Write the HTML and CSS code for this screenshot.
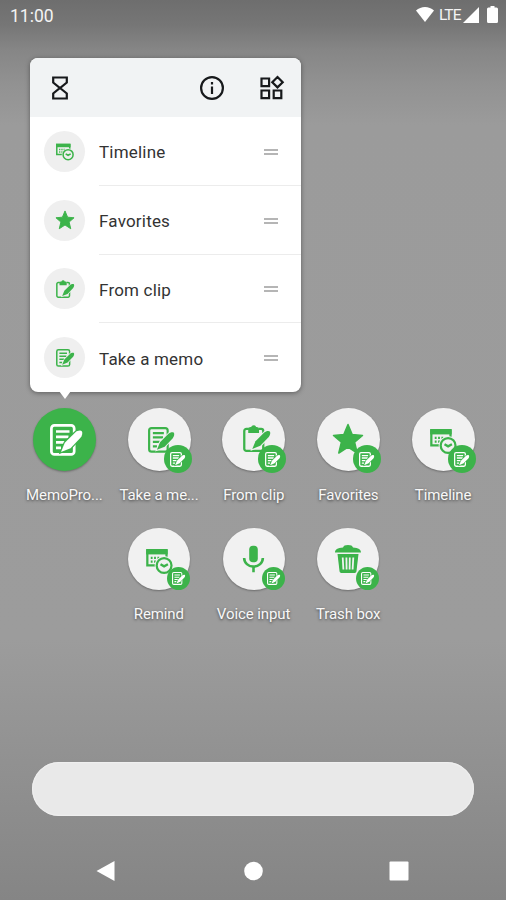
FILE: index.html
```
<!DOCTYPE html>
<html>
<head>
<meta charset="UTF-8">
<title>MemoPro shortcuts</title>
<link rel="stylesheet" href="styles.css">
</head>
<body>
	<!-- shared icons -->
	<svg class="defs">
		<symbol id="memo" viewBox="0 0 32 32">
			<rect class="line" x="1.4" y="1.4" width="22.8" height="29" rx="3"/>
			<path class="line" d="M6 7.500h13.500M6 12.800h12.500M6 18.300h8.500M6 23.800h5"/>
			<path class="pen" d="M31.800 7.200c-1.200-1.300-5-.4-6.600 1.200L14.800 18.800 11 28l9.500-3.800L30.500 13.700c1.600-1.800 2.400-5.200 1.300-6.500z"/>
		</symbol>
		<symbol id="clip" viewBox="0 0 32 32">
			<path class="line" d="M7 4.600H4a2.500 2.500 0 0 0-2.500 2.500v21A2.500 2.500 0 0 0 4 30.600h17.500a2.500 2.500 0 0 0 2.500-2.500V7.100a2.500 2.500 0 0 0-2.500-2.500h-3"/>
			<path class="fill" d="M6.200 9.500V5.200C6.200 3.500 7.500 2.500 9 2.500h.6a3.200 3.200 0 0 1 6 0h.6c1.500 0 2.800 1 2.800 2.700v4.300z"/>
			<path class="pen" d="M31.800 7.700c-1.200-1.300-5-.4-6.600 1.200L14.800 19.300 11 28.500l9.500-3.800L30.500 14.200c1.600-1.800 2.400-5.200 1.300-6.500z"/>
		</symbol>
		<symbol id="star" viewBox="0 0 32 32">
			<path class="fill star" d="M16 1.500l4.200 10 10.300.9-7.900 6.900 2.600 10.700-9.200-6-9.200 6 2.600-10.700-7.900-6.900 10.300-.9z"/>
		</symbol>
		<symbol id="timeline" viewBox="0 0 32 30">
			<path class="line" d="M1.400 2v17.500h23V2z"/>
			<path class="fill" d="M0 0h25.800v6.500H0z"/>
			<path class="line" d="M5.500 10.500h2.200m1.800 0h2.200m1.800 0h2.200M5.500 15h2.200m1.800 0h2.200"/>
			<circle class="halo" cx="21.500" cy="19.800" r="11.300"/>
			<circle class="line" cx="21.500" cy="19.800" r="8.900"/>
			<path class="line" d="M17.200 18.200l4.300 2.600 4.600-2.600"/>
		</symbol>
		<symbol id="mic" viewBox="0 0 22 28">
			<rect class="fill" x="6.500" y="0" width="9" height="17.500" rx="4"/>
			<path class="line" d="M1.200 13a9.800 9 0 0 0 19.600 0M11 22.500V28"/>
		</symbol>
		<symbol id="trash" viewBox="0 0 26 28">
			<path class="fill" d="M0 7.500C0 4.500 2.500 3 8 2.500 8.500 .8 10 0 13 0s4.500 .8 5 2.500c5.500 .5 8 2 8 5z"/>
			<path class="fill" d="M2.500 9h21l-2 17c-.2 1.400-1 2-2.500 2H7c-1.500 0-2.300-.6-2.500-2z"/>
			<path class="bars" d="M7.700 12.500l.7 12M11.400 12.500l.2 12M14.800 12.500l-.2 12M18.300 12.500l-.7 12"/>
		</symbol>
	</svg>

	<div class="statusBar">
		<span class="clock">11:00</span>
		<svg class="wifi" viewBox="0 0 18 15"><path d="M0 3.600C5-1.100 13-1.100 18 3.600L9 15z"/></svg>
		<span class="network">LTE</span>
		<svg class="signal" viewBox="0 0 16 16"><path d="M16 0v16H0z"/></svg>
		<svg class="battery" viewBox="0 0 11 17"><path d="M3.500 1.500V0h4v1.500h2Q11 1.500 11 3v12.500Q11 17 9.500 17h-8Q0 17 0 15.500V3q0-1.500 1.500-1.500z"/></svg>
	</div>

	<div class="popup">
		<div class="popupHeader">
			<svg class="hourglass" viewBox="0 0 16 24"><path d="M1.200 1.500h13.600v5L8 12 1.200 6.500zM8 12l6.800 5.500v5H1.200v-5z"/></svg>
			<svg class="info" viewBox="0 0 24 24"><circle cx="12" cy="12" r="10.900"/><path d="M12 10.500V18M12 6v2.500"/></svg>
			<svg class="widgets" viewBox="0 0 24 24"><path d="M1.500 2.500h7.600v7.600H1.500zM1.500 14.500h7.600v7.600H1.500zM13.700 14.500h7.600v7.600h-7.600zM17.500 1l5.200 5.200-5.200 5.200-5.200-5.200z"/></svg>
		</div>
		<ul class="menu">
			<li>
				<span class="menuIcon"><svg class="small"><use href="#timeline"/></svg></span>
				<span class="menuText">Timeline</span><i class="handle"></i>
			</li>
			<li>
				<span class="menuIcon"><svg class="small smallStar"><use href="#star"/></svg></span>
				<span class="menuText">Favorites</span><i class="handle"></i>
			</li>
			<li>
				<span class="menuIcon"><svg class="small"><use href="#clip"/></svg></span>
				<span class="menuText">From clip</span><i class="handle"></i>
			</li>
			<li>
				<span class="menuIcon"><svg class="small"><use href="#memo"/></svg></span>
				<span class="menuText">Take a memo</span><i class="handle"></i>
			</li>
		</ul>
	</div>

	<div class="apps">
		<div class="app">
			<div class="appIcon main"><svg class="iconMain"><use href="#memo"/></svg></div>
			<span class="label">MemoPro...</span>
		</div>
		<div class="app">
			<div class="appIcon"><svg class="iconMemo"><use href="#memo"/></svg><b class="badge"><svg><use href="#memo"/></svg></b></div>
			<span class="label">Take a me...</span>
		</div>
		<div class="app">
			<div class="appIcon"><svg class="iconClip"><use href="#clip"/></svg><b class="badge"><svg><use href="#memo"/></svg></b></div>
			<span class="label">From clip</span>
		</div>
		<div class="app">
			<div class="appIcon"><svg class="iconStar"><use href="#star"/></svg><b class="badge"><svg><use href="#memo"/></svg></b></div>
			<span class="label">Favorites</span>
		</div>
		<div class="app">
			<div class="appIcon"><svg class="iconTime"><use href="#timeline"/></svg><b class="badge"><svg><use href="#memo"/></svg></b></div>
			<span class="label">Timeline</span>
		</div>
	</div>
	<div class="apps second">
		<div class="app">
			<div class="appIcon"><svg class="iconTime"><use href="#timeline"/></svg><b class="badge"><svg><use href="#memo"/></svg></b></div>
			<span class="label">Remind</span>
		</div>
		<div class="app">
			<div class="appIcon"><svg class="iconMic"><use href="#mic"/></svg><b class="badge"><svg><use href="#memo"/></svg></b></div>
			<span class="label">Voice input</span>
		</div>
		<div class="app">
			<div class="appIcon"><svg class="iconTrash"><use href="#trash"/></svg><b class="badge"><svg><use href="#memo"/></svg></b></div>
			<span class="label">Trash box</span>
		</div>
	</div>

	<div class="searchBar"></div>

	<div class="navBar">
		<svg viewBox="0 0 20 22"><path d="M18.500 1v20L.5 11z"/></svg>
		<svg viewBox="0 0 20 22"><circle cx="10.500" cy="11" r="9.300"/></svg>
		<svg viewBox="0 0 20 22"><rect x=".5" y="1.500" width="19" height="19" rx="1"/></svg>
	</div>
</body>
</html>
```
FILE: styles.css
```
* {
	box-sizing: border-box;
}

body {
	margin: 0;
	width: 506px;
	height: 900px;
	overflow: hidden;
	display: flex;
	flex-direction: column;
	font-family: Roboto, "Liberation Sans", sans-serif;
	background: linear-gradient(#6e6e6e 0, #767676 25px, #868686 50px, #929292 85px, #9b9b9b 125px, #9c9c9c 640px, #939393 740px, #858585 900px);
}

svg {
	display: block;
	overflow: visible;
}

symbol {
	overflow: visible;
}

.defs {
	position: absolute;
	width: 0;
	height: 0;
}

/* status bar */
.statusBar {
	height: 58px;
	padding: 6px 8px 0 10px;
	display: flex;
	align-items: flex-start;
	color: #f3f3f3;
	fill: #fff;
}

.clock {
	font-size: 17.5px;
	line-height: 20px;
	margin-right: auto;
}

.wifi {
	width: 18px;
	height: 15px;
	margin-top: 1px;
}

.network {
	font-size: 15.5px;
	line-height: 18px;
	width: 24px;
	margin-left: 5px;
	letter-spacing: -.9px;
}

.signal {
	width: 16px;
	height: 16px;
	margin-top: 1px;
}

.battery {
	width: 11px;
	height: 17px;
	margin-left: 8px;
}

/* shortcut popup */
.popup {
	position: relative;
	width: 271px;
	height: 334px;
	margin-left: 30px;
	background: #fff;
	border-radius: 8px;
	box-shadow: 0 1px 5px rgba(0,0,0,.4);
}

.popup::after {
	content: "";
	position: absolute;
	left: 29px;
	top: 333px;
	border: 6px solid transparent;
	border-top: 8px solid #fff;
	border-bottom: 0;
}

.popupHeader {
	height: 59px;
	padding: 0 17px 0 22px;
	display: flex;
	align-items: center;
	background: #f1f3f4;
	border-radius: 8px 8px 0 0;
	fill: none;
	stroke: #17191b;
	stroke-width: 2.2;
}

.hourglass {
	width: 16px;
	height: 24px;
	margin-right: auto;
}

.info,
.widgets {
	width: 24px;
	height: 24px;
}

.info {
	margin-right: 36px;
}

.menu {
	margin: 0;
	padding: 0;
	list-style: none;
}

.menu li {
	height: 68.8px;
	padding: 0 23px 0 14px;
	display: flex;
	align-items: center;
	background: linear-gradient(#ececec, #ececec) 69px 100% / 202px 1px no-repeat;
}

.menu li:last-child {
	background: none;
}

.menuIcon {
	--halo: #efefef;
	width: 41px;
	height: 41px;
	border-radius: 50%;
	background: #efefef;
	color: #3cb34a;
	display: flex;
	align-items: center;
	justify-content: center;
}

.small {
	width: 18px;
	height: 18px;
	margin: 1px 0 0 1px;
}

.smallStar {
	width: 20px;
	height: 20px;
	margin: 0;
}

.menuText {
	flex: 1;
	margin-left: 14px;
	padding-top: 2px;
	font-size: 17px;
	letter-spacing: .2px;
	color: #333;
}

.handle {
	width: 14px;
	height: 6px;
	margin-top: 1px;
	border: solid #b5b5b5;
	border-width: 2px 0;
}

/* icon parts */
.line {
	fill: none;
	stroke: currentColor;
	stroke-width: 2.7;
}

.fill {
	fill: currentColor;
}

.star {
	stroke: currentColor;
	stroke-width: 1.5;
	stroke-linejoin: round;
}

.pen {
	fill: currentColor;
	stroke: var(--halo);
	stroke-width: 2.4;
	paint-order: stroke;
}

.halo {
	fill: var(--halo);
}

.bars {
	fill: none;
	stroke: var(--halo);
	stroke-width: 1.8;
}

/* home screen */
.apps {
	display: flex;
	padding: 16px 0 0 17px;
	height: 135px;
}

.second {
	padding: 1px 0 0 111.5px;
}

.app {
	width: 94.7px;
	display: flex;
	flex-direction: column;
	align-items: center;
}

.appIcon {
	--halo: #f1f1f1;
	position: relative;
	width: 63px;
	height: 63px;
	border-radius: 50%;
	background: #f1f1f1;
	color: #3cb34a;
	display: flex;
	align-items: center;
	justify-content: center;
	box-shadow: 0 1px 2px rgba(0,0,0,.3);
}

.second .appIcon {
	width: 62px;
	height: 62px;
}

.main {
	--halo: #3cb34a;
	background: #3cb34a;
	color: #fff;
}

.iconMain {
	width: 32px;
	height: 32px;
	margin-left: 4px;
}

.iconMemo {
	width: 26px;
	height: 26px;
	margin-left: 3px;
}

.iconClip {
	width: 27px;
	height: 27px;
	margin: 0 0 3px 5px;
}

.iconStar {
	width: 32px;
	height: 32px;
	margin-bottom: 2px;
}

.iconTime {
	width: 27px;
	height: 25px;
	margin: 4px 0 0 1px;
}

.iconMic {
	width: 21px;
	height: 28px;
}

.iconTrash {
	width: 26px;
	height: 28px;
}

.badge {
	--halo: #3cb34a;
	position: absolute;
	right: -1px;
	bottom: -2px;
	width: 28px;
	height: 28px;
	border-radius: 50%;
	background: #3cb34a;
	color: #fff;
	display: flex;
	align-items: center;
	justify-content: center;
}

.badge svg {
	width: 15px;
	height: 15px;
}

.second .badge {
	right: 0;
	bottom: 0;
	width: 23px;
	height: 23px;
}

.second .badge svg {
	width: 13px;
	height: 13px;
}

.label {
	margin-top: 15px;
	font-size: 15px;
	letter-spacing: -.1px;
	line-height: 18px;
	white-space: nowrap;
	color: #f8f8f8;
	text-shadow: 0 1px 3px rgba(0,0,0,.6);
}

.searchBar {
	width: 442px;
	height: 54px;
	margin: 100px 0 0 32px;
	border-radius: 27px;
	background: #e9e9e9;
	box-shadow: inset 0 0 1px 1px #f0f0f0;
}

.navBar {
	margin-top: 44px;
	padding: 0 97px 0 96px;
	display: flex;
	justify-content: space-between;
	fill: #fff;
}

.navBar svg {
	width: 20px;
	height: 22px;
}
```
